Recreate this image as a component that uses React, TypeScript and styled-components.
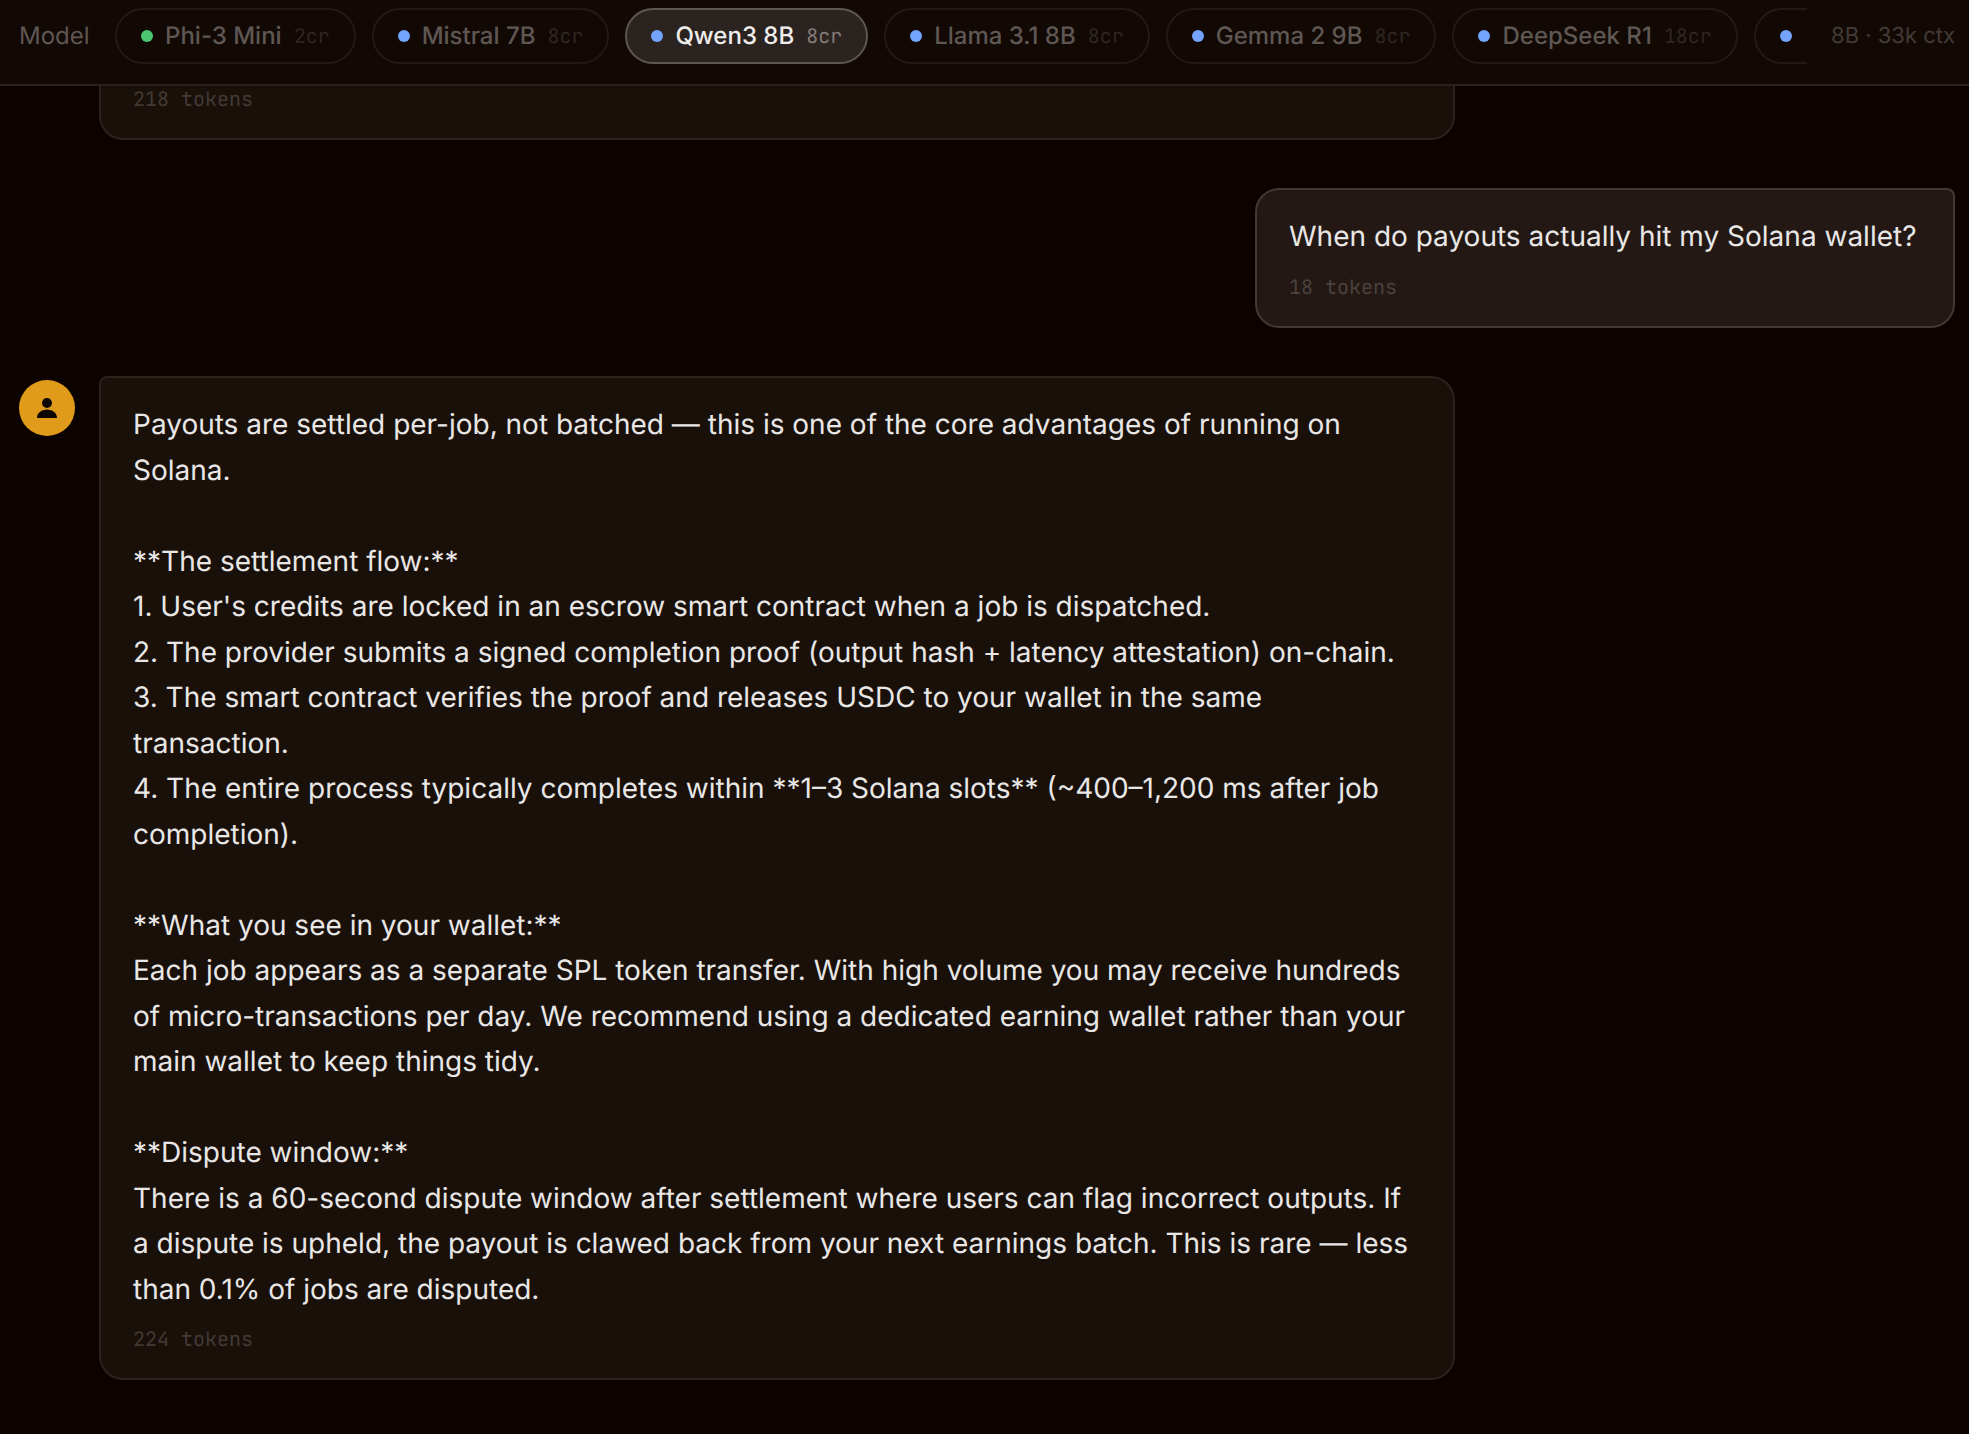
import React, { useState } from "react";
import styled, { createGlobalStyle } from "styled-components";

const mono = `"JetBrains Mono", "DejaVu Sans Mono", "Liberation Mono", monospace`;

const GlobalStyle = createGlobalStyle`
  *, *::before, *::after { box-sizing: border-box; }
  html, body, #root { height: 100%; }
  body {
    margin: 0;
    background: #0c0200;
    color: #e9e7e6;
    font-family: Inter, "Liberation Sans", sans-serif;
    text-rendering: geometricPrecision;
    overflow: hidden;
  }
`;

const Page = styled.div`
  display: flex;
  flex-direction: column;
  height: 100%;
`;

const ModelBar = styled.header`
  display: flex;
  flex: none;
  align-items: center;
  gap: 24px;
  padding: 8px 14px 20px 19px;
  background: #120904;
  border-bottom: 2px solid #2a211d;
`;

const BarLabel = styled.span`
  flex: none;
  min-width: 72px;
  font-size: 24px;
  line-height: 32px;
  color: #5e5753;
`;

const BarInfo = styled.span`
  flex: none;
  font-size: 22px;
  line-height: 32px;
  color: #433b37;
`;

const ModelList = styled.div`
  display: flex;
  flex: 1;
  min-width: 0;
  gap: 16px;
  overflow: hidden;
`;

const Pill = styled.button<{ $active: boolean }>`
  display: flex;
  flex: none;
  align-items: center;
  gap: 12px;
  height: 56px;
  min-width: 112px;
  padding: 0 24px;
  border: 2px solid ${(p) => (p.$active ? "#5d5652" : "#231a16")};
  border-radius: 28px;
  background: ${(p) => (p.$active ? "#2b231f" : "transparent")};
  color: ${(p) => (p.$active ? "#efedec" : "#5e5753")};
  font-family: inherit;
  font-size: 24px;
  font-weight: 500;
  line-height: 32px;
  text-rendering: inherit;
  white-space: nowrap;
  cursor: pointer;
`;

const Dot = styled.span<{ $color: string }>`
  flex: none;
  width: 12px;
  height: 12px;
  border-radius: 50%;
  background: ${(p) => p.$color};
`;

const Cost = styled.span<{ $active: boolean }>`
  font-family: ${mono};
  font-size: 20px;
  font-weight: 400;
  color: ${(p) => (p.$active ? "#837d7a" : "#2f2622")};
`;

const Thread = styled.main`
  display: flex;
  flex: 1;
  flex-direction: column;
  justify-content: flex-end;
  gap: 48px;
  min-height: 0;
  padding: 0 14px 54px 19px;
  overflow: hidden;
`;

const Row = styled.article<{ $mine?: boolean }>`
  display: flex;
  flex: none;
  justify-content: ${(p) => (p.$mine ? "flex-end" : "flex-start")};
  gap: 24px;
`;

const Avatar = styled.div`
  display: flex;
  flex: none;
  align-items: center;
  justify-content: center;
  width: 56px;
  height: 56px;
  margin-top: 4px;
  border-radius: 50%;
  background: #e09b1a;
`;

const Bubble = styled.div<{ $mine?: boolean }>`
  min-width: 700px;
  max-width: 1356px;
  min-height: 140px;
  padding: 24px 32px;
  border: 2px solid ${(p) => (p.$mine ? "#423935" : "#2b221e")};
  border-radius: ${(p) => (p.$mine ? "24px 8px 24px 24px" : "8px 24px 24px 24px")};
  background: ${(p) => (p.$mine ? "#231814" : "#19100a")};
`;

const ContinuedBubble = styled(Bubble)`
  display: flex;
  flex: 1;
  align-items: flex-end;
  margin-left: 80px;
`;

const Text = styled.p`
  margin: 0;
  font-size: 28px;
  line-height: 1.625;
  white-space: pre-wrap;
`;

const Tokens = styled.div<{ $mine?: boolean }>`
  margin-top: 12px;
  font-family: ${mono};
  font-size: 20px;
  line-height: 30px;
  color: ${(p) => (p.$mine ? "#4b423e" : "#433a36")};
`;

const GREEN = "#4ac76f";
const BLUE = "#74a3fb";

type Model = { name?: string; cost?: string; color: string };

const models: Model[] = [
  { name: "Phi-3 Mini", cost: "2cr", color: GREEN },
  { name: "Mistral 7B", cost: "8cr", color: BLUE },
  { name: "Qwen3 8B", cost: "8cr", color: BLUE },
  { name: "Llama 3.1 8B", cost: "8cr", color: BLUE },
  { name: "Gemma 2 9B", cost: "8cr", color: BLUE },
  { name: "DeepSeek R1", cost: "18cr", color: BLUE },
  { color: BLUE },
];

const answer = `Payouts are settled per-job, not batched — this is one of the core advantages of running on Solana.

**The settlement flow:**
1. User's credits are locked in an escrow smart contract when a job is dispatched.
2. The provider submits a signed completion proof (output hash + latency attestation) on-chain.
3. The smart contract verifies the proof and releases USDC to your wallet in the same transaction.
4. The entire process typically completes within **1–3 Solana slots** (~400–1,200 ms after job completion).

**What you see in your wallet:**
Each job appears as a separate SPL token transfer. With high volume you may receive hundreds of micro-transactions per day. We recommend using a dedicated earning wallet rather than your main wallet to keep things tidy.

**Dispute window:**
There is a 60-second dispute window after settlement where users can flag incorrect outputs. If a dispute is upheld, the payout is clawed back from your next earnings batch. This is rare — less than 0.1% of jobs are disputed.`;

function PersonIcon() {
  return (
    <svg width="20" height="20" viewBox="0 0 20 20" fill="#0d0602" aria-hidden="true">
      <circle cx="10" cy="5" r="5" />
      <path d="M0 20C0 15 4.500 11.500 10 11.500S20 15 20 20Z" />
    </svg>
  );
}

export default function App() {
  const [selected, setSelected] = useState(2);
  return (
    <Page>
      <GlobalStyle />
      <ModelBar>
        <BarLabel>Model</BarLabel>
        <ModelList>
          {models.map((m, i) => (
            <Pill
              key={i}
              type="button"
              $active={i === selected}
              aria-pressed={i === selected}
              onClick={() => setSelected(i)}
            >
              <Dot $color={m.color} />
              {m.name && <span>{m.name}</span>}
              {m.cost && <Cost $active={i === selected}>{m.cost}</Cost>}
            </Pill>
          ))}
        </ModelList>
        <BarInfo>8B · 33k ctx</BarInfo>
      </ModelBar>
      <Thread>
        <Row>
          <ContinuedBubble>
            <Tokens>218 tokens</Tokens>
          </ContinuedBubble>
        </Row>
        <Row $mine>
          <Bubble $mine>
            <Text>When do payouts actually hit my Solana wallet?</Text>
            <Tokens $mine>18 tokens</Tokens>
          </Bubble>
        </Row>
        <Row>
          <Avatar>
            <PersonIcon />
          </Avatar>
          <Bubble>
            <Text>{answer}</Text>
            <Tokens>224 tokens</Tokens>
          </Bubble>
        </Row>
      </Thread>
    </Page>
  );
}
